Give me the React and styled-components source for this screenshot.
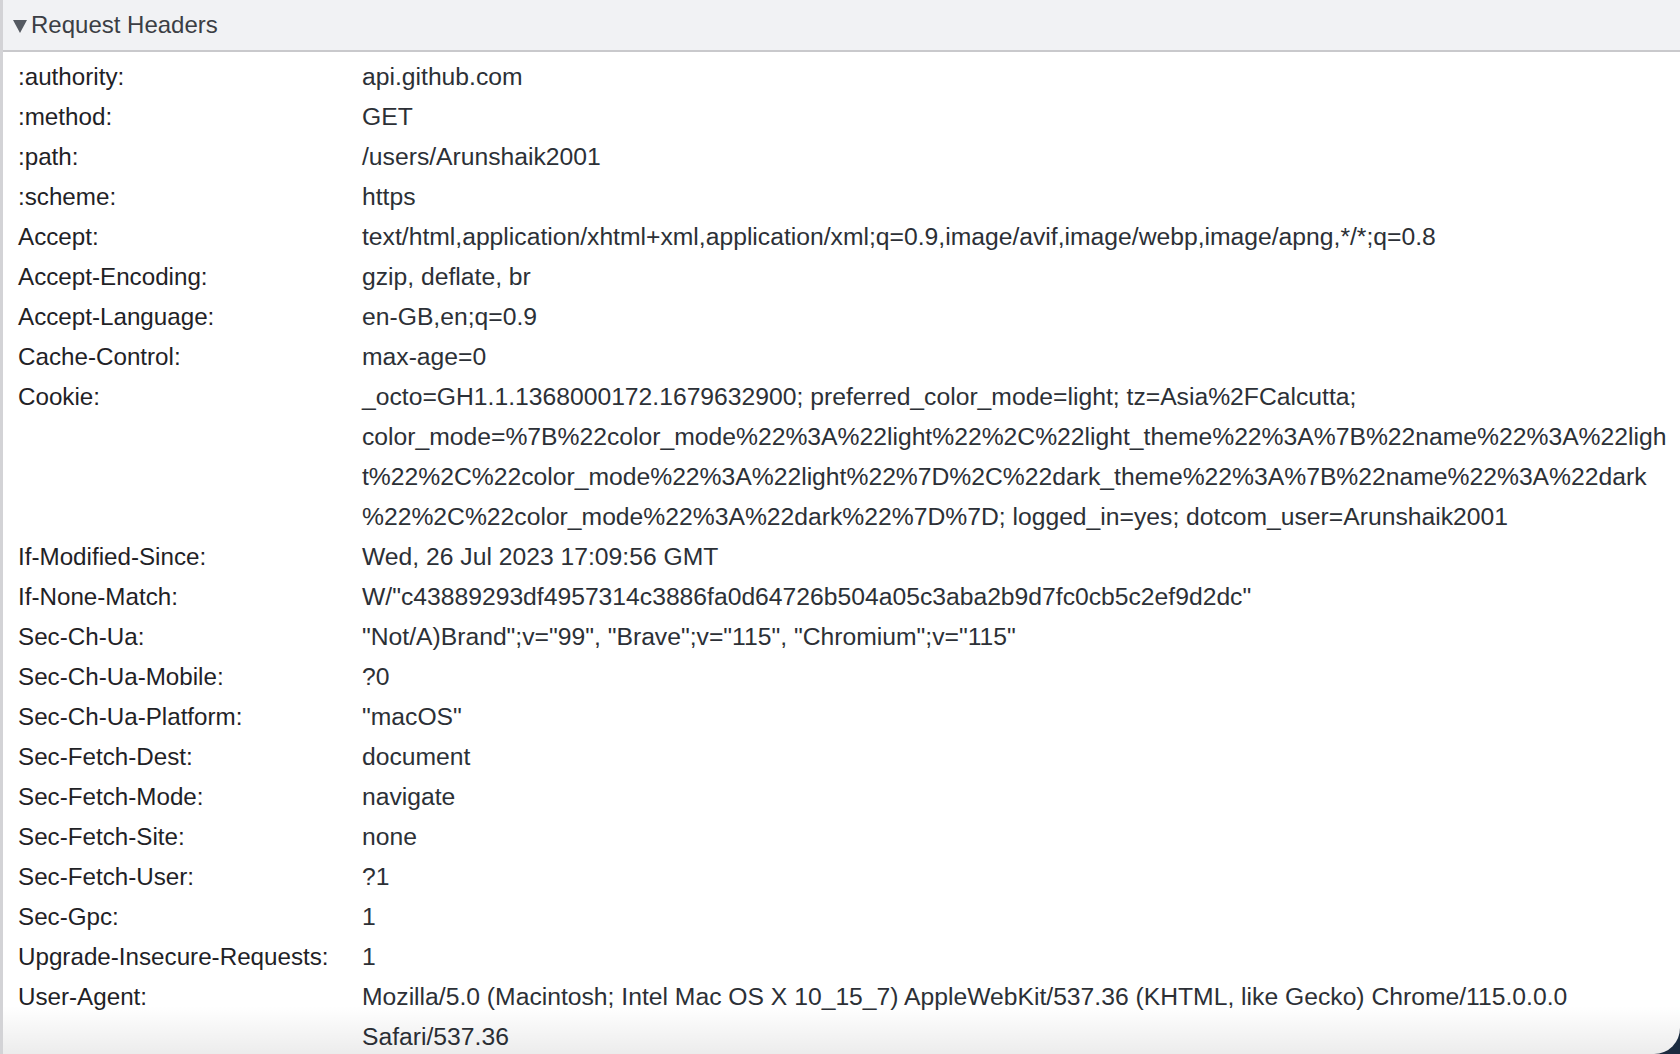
import styled, { createGlobalStyle } from "styled-components";

const GlobalStyle = createGlobalStyle`
  html, body {
    margin: 0;
    padding: 0;
    background: #1c2b40;
    overflow: hidden;
  }
  body {
    font-family: "Liberation Sans", Arial, Helvetica, sans-serif;
  }
`;

const Panel = styled.div`
  position: relative;
  width: 1680px;
  height: 1054px;
  box-sizing: border-box;
  background: #ffffff;
  border-left: 3px solid #d3d3d6;
  border-bottom-right-radius: 26px;
  overflow: hidden;
`;

const Header = styled.div`
  display: flex;
  align-items: center;
  gap: 4px;
  height: 50px;
  padding-left: 10px;
  background: #f1f2f4;
  border-bottom: 2px solid #c9c9cc;
  color: #3b3e44;
  font-size: 24px;
`;

const Caret = styled.span`
  width: 0;
  height: 0;
  border-left: 7.5px solid transparent;
  border-right: 7.5px solid transparent;
  border-top: 13px solid #555a61;
  margin-top: 2px;
`;

const List = styled.div`
  display: grid;
  grid-template-columns: 344px 1fr;
  padding: 5px 0 0 15px;
  line-height: 40px;
`;

const Name = styled.div`
  color: #1f2226;
  font-size: 24.2px;
  white-space: nowrap;
`;

const Value = styled.div`
  color: #2c3036;
  font-size: 24.7px;
  white-space: nowrap;
`;

const Fade = styled.div`
  position: absolute;
  left: 0;
  right: 0;
  bottom: 0;
  height: 48px;
  background: linear-gradient(to bottom, rgba(0, 0, 0, 0), rgba(0, 0, 0, 0.075));
  pointer-events: none;
`;

const headers = [
  [":authority:", ["api.github.com"]],
  [":method:", ["GET"]],
  [":path:", ["/users/Arunshaik2001"]],
  [":scheme:", ["https"]],
  [
    "Accept:",
    [
      "text/html,application/xhtml+xml,application/xml;q=0.9,image/avif,image/webp,image/apng,*/*;q=0.8",
    ],
  ],
  ["Accept-Encoding:", ["gzip, deflate, br"]],
  ["Accept-Language:", ["en-GB,en;q=0.9"]],
  ["Cache-Control:", ["max-age=0"]],
  [
    "Cookie:",
    [
      "_octo=GH1.1.1368000172.1679632900; preferred_color_mode=light; tz=Asia%2FCalcutta;",
      "color_mode=%7B%22color_mode%22%3A%22light%22%2C%22light_theme%22%3A%7B%22name%22%3A%22ligh",
      "t%22%2C%22color_mode%22%3A%22light%22%7D%2C%22dark_theme%22%3A%7B%22name%22%3A%22dark",
      "%22%2C%22color_mode%22%3A%22dark%22%7D%7D; logged_in=yes; dotcom_user=Arunshaik2001",
    ],
  ],
  ["If-Modified-Since:", ["Wed, 26 Jul 2023 17:09:56 GMT"]],
  [
    "If-None-Match:",
    ['W/"c43889293df4957314c3886fa0d64726b504a05c3aba2b9d7fc0cb5c2ef9d2dc"'],
  ],
  ["Sec-Ch-Ua:", ['"Not/A)Brand";v="99", "Brave";v="115", "Chromium";v="115"']],
  ["Sec-Ch-Ua-Mobile:", ["?0"]],
  ["Sec-Ch-Ua-Platform:", ['"macOS"']],
  ["Sec-Fetch-Dest:", ["document"]],
  ["Sec-Fetch-Mode:", ["navigate"]],
  ["Sec-Fetch-Site:", ["none"]],
  ["Sec-Fetch-User:", ["?1"]],
  ["Sec-Gpc:", ["1"]],
  ["Upgrade-Insecure-Requests:", ["1"]],
  [
    "User-Agent:",
    [
      "Mozilla/5.0 (Macintosh; Intel Mac OS X 10_15_7) AppleWebKit/537.36 (KHTML, like Gecko) Chrome/115.0.0.0",
      "Safari/537.36",
    ],
  ],
];

export default function App() {
  return (
    <>
      <GlobalStyle />
      <Panel>
        <Header>
          <Caret />
          Request Headers
        </Header>
        <List>
          {headers.map(([name, lines]) => (
            <>
              <Name key={name}>{name}</Name>
              <Value key={name + "-v"}>
                {lines.map((line, i) => (
                  <div key={i}>{line}</div>
                ))}
              </Value>
            </>
          ))}
        </List>
        <Fade />
      </Panel>
    </>
  );
}
